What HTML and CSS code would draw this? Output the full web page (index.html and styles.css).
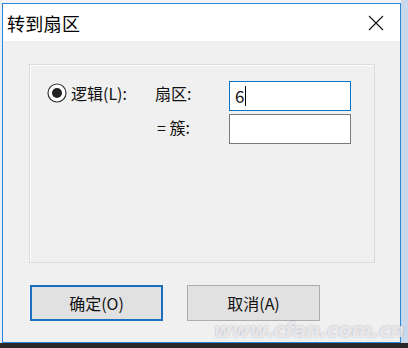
FILE: index.html
```html
<!DOCTYPE html>
<html>
<head>
  <meta charset="UTF-8">
  <title>转到扇区</title>
  <link rel="stylesheet" href="styles.css">
</head>
<body>
  <div class="desk">
    <div class="dialog">
      <div class="titlebar">
        <span class="title">转到扇区</span>
        <svg class="close" width="16" height="16" viewBox="0 0 16 16">
          <path d="M1 1 L15 15 M15 1 L1 15" stroke="#111" stroke-width="1.1" fill="none"/>
        </svg>
      </div>

      <div class="body">
        <div class="group">
          <div class="form-grid">
            <label class="radio">
              <svg width="20" height="20" viewBox="0 0 20 20">
                <circle cx="10" cy="10" r="9" fill="#fff" stroke="#333" stroke-width="1.2"/>
                <circle cx="10" cy="10" r="5" fill="#222"/>
              </svg>
              <span>逻辑(L):</span>
            </label>
            <span class="field-label">扇区:</span>
            <div class="text-input focused">6<span class="caret"></span></div>

            <span></span>
            <span class="field-label eq">= 簇:</span>
            <div class="text-input"></div>
          </div>
        </div>

        <div class="buttons">
          <button class="btn btn-default">确定(O)</button>
          <button class="btn">取消(A)</button>
        </div>
      </div>

      <div class="watermark">www.cfan.com.cn</div>
    </div>
  </div>
</body>
</html>
```

FILE: styles.css
```css
body {
  margin: 0;
  width: 408px;
  height: 348px;
  overflow: hidden;
  background: #f4f6fa;
  font-family: "Noto Sans CJK SC", "Noto Sans", sans-serif;
}

.desk {
  height: 348px;
  padding: 3px 0 0 2px;
  box-sizing: border-box;
  background: linear-gradient(to right, #e8eef6 0, #e8eef6 2px, transparent 2px),
              linear-gradient(to left, #c9d9ec 0, #c9d9ec 7px, transparent 7px);
  border-bottom: 5px solid #2a2a2a;
}

.dialog {
  position: relative;
  width: 399px;
  height: 340px;
  box-sizing: border-box;
  border: 1px solid #2b86d6;
  background: #f0f0f0;
  display: flex;
  flex-direction: column;
}

.titlebar {
  height: 37px;
  background: #fff;
  display: flex;
  align-items: center;
  justify-content: space-between;
  padding: 0 16px 0 4px;
}

.title {
  font-size: 18px;
  color: #000;
  letter-spacing: 0.3px;
}

.close {
  display: block;
  margin-top: 1px;
}

.body {
  flex: 1;
  padding: 23px 0 0 26px;
}

.group {
  width: 346px;
  height: 199px;
  box-sizing: border-box;
  border: 1px solid #dcdcdc;
  box-shadow: inset 1px 1px 0 #fbfbfb;
  padding: 16px 0 0 17px;
}

.form-grid {
  display: grid;
  grid-template-columns: 108px 74px 122px;
  grid-auto-rows: 30px;
  row-gap: 3px;
  align-items: center;
  font-size: 16px;
  color: #111;
}

.radio {
  display: flex;
  align-items: center;
  gap: 4px;
  margin-top: -7px;
}

.radio svg {
  display: block;
}

.field-label {
  margin-top: -7px;
}

.field-label.eq {
  padding-left: 2px;
  margin-top: -4px;
}

.text-input {
  height: 30px;
  box-sizing: border-box;
  border: 1px solid #7a7a7a;
  background: #fff;
  font-size: 17px;
  line-height: 26px;
  padding-left: 5px;
  display: flex;
  align-items: center;
}

.text-input.focused {
  border-color: #0f72c4;
}

.caret {
  display: inline-block;
  width: 1px;
  height: 20px;
  background: #000;
  margin-left: 1px;
}

.buttons {
  display: flex;
  gap: 24px;
  margin: 22px 0 0 1px;
}

.btn {
  width: 133px;
  height: 36px;
  box-sizing: border-box;
  border: 1px solid #adadad;
  background: #e1e1e1;
  font-family: inherit;
  font-size: 16px;
  color: #111;
  padding: 0;
}

.btn-default {
  border: 2px solid #1a6fc0;
}

.watermark {
  position: absolute;
  right: -4px;
  bottom: 0;
  font-family: "DejaVu Sans", sans-serif;
  font-size: 20px;
  font-weight: bold;
  font-style: italic;
  color: rgba(255, 255, 255, 0.7);
  text-shadow: 0 0 2px rgba(120, 120, 140, 0.6);
  letter-spacing: -0.5px;
}
```
